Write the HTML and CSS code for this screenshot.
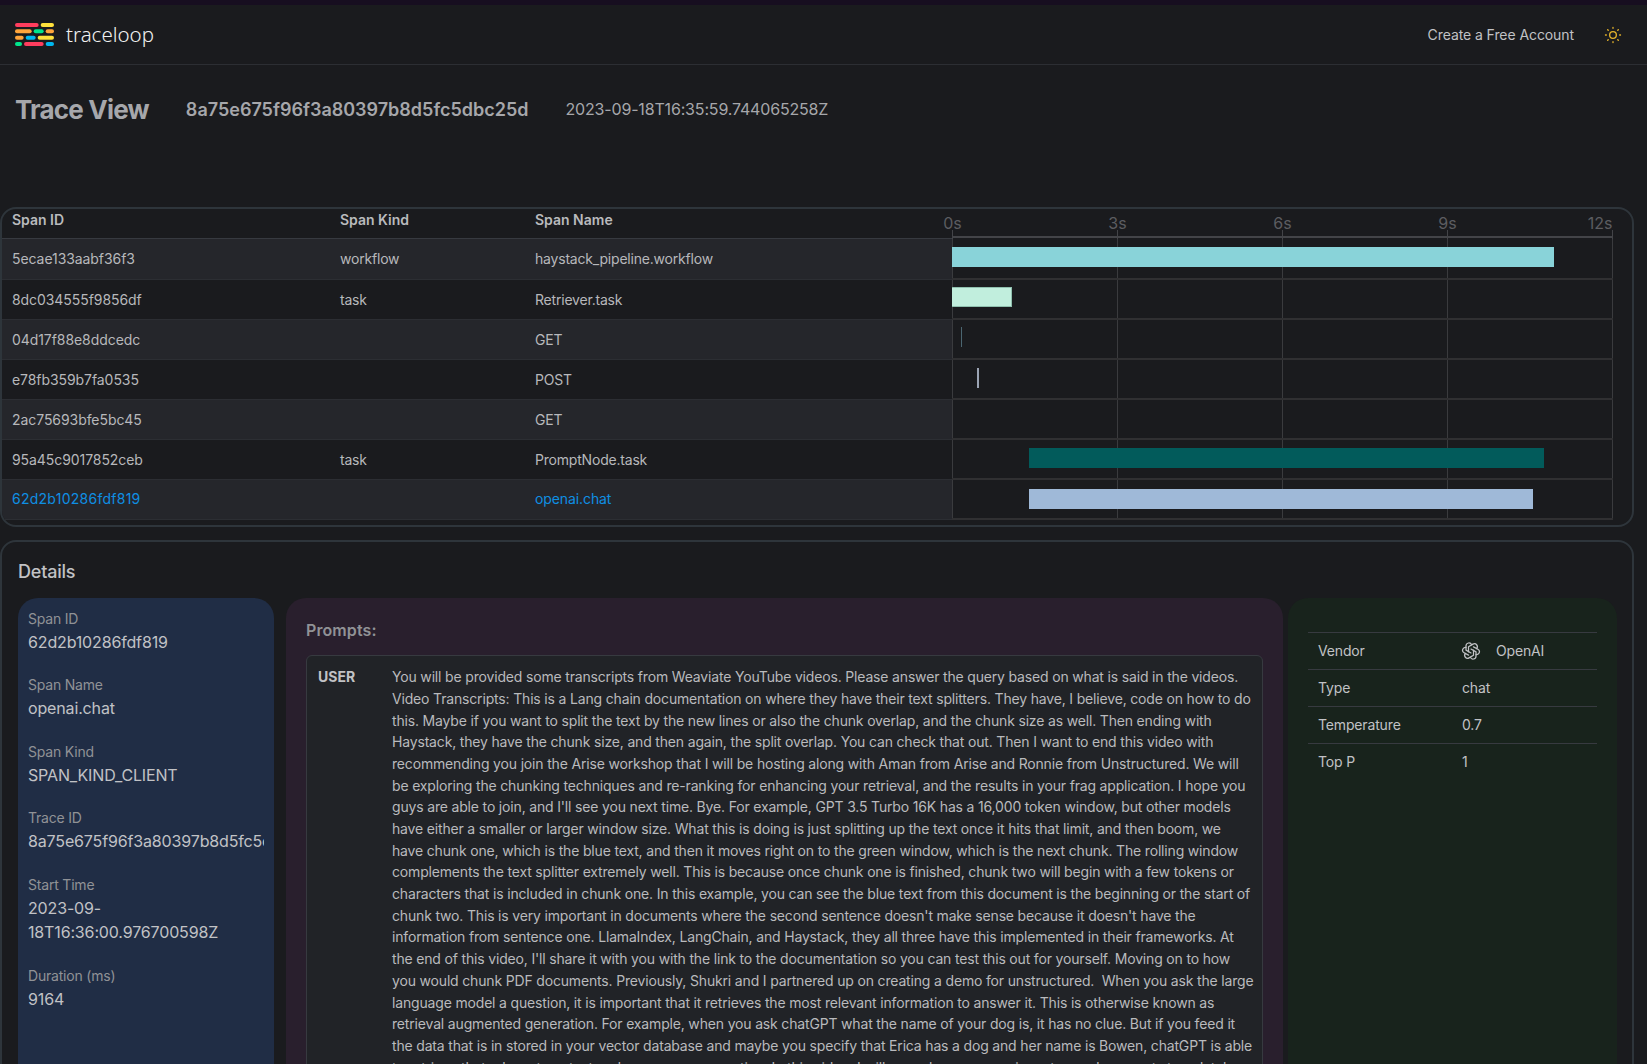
FILE: index.html
```html
<!DOCTYPE html>
<html lang="en">
<head>
<meta charset="utf-8">
<title>Trace View</title>
<link rel="stylesheet" href="styles.css">
</head>
<body>
<div class="strip"></div>
<header class="topbar">
  <div class="brand">
    <svg class="logo" viewBox="0 0 117 69" aria-hidden="true">
      <rect x="0" y="0" width="71" height="12" rx="6" fill="#ff3d5e"/><rect x="77" y="0" width="40" height="12" rx="6" fill="#ffe13c"/>
      <rect x="0" y="19" width="50" height="12" rx="6" fill="#ffa53c"/><rect x="56" y="19" width="30" height="12" rx="6" fill="#00e58c"/><rect x="92" y="19" width="25" height="12" rx="6" fill="#ffa53c"/>
      <rect x="0" y="38" width="26" height="12" rx="6" fill="#ffa53c"/><rect x="32" y="38" width="30" height="12" rx="6" fill="#00b8f0"/><rect x="68" y="38" width="49" height="12" rx="6" fill="#ffe13c"/>
      <rect x="0" y="57" width="21" height="12" rx="6" fill="#00e58c"/><rect x="27" y="57" width="59" height="12" rx="6" fill="#ff3d5e"/><rect x="92" y="57" width="25" height="12" rx="6" fill="#00b8f0"/>
    </svg>
    <span class="brand-name">traceloop</span>
  </div>
  <div class="top-actions">
    <a class="signup">Create a Free Account</a>
    <svg class="sun" viewBox="0 0 24 24" fill="none" stroke="currentColor" stroke-width="1.6" stroke-linecap="round" stroke-linejoin="round" aria-hidden="true"><path d="M12 12m-4 0a4 4 0 1 0 8 0a4 4 0 1 0 -8 0"/><path d="M3 12h1m8 -9v1m8 8h1m-9 8v1m-6.4 -15.4l.7 .7m12.1 -.7l-.7 .7m0 11.4l.7 .7m-12.1 -.7l-.7 .7"/></svg>
  </div>
</header>

<div class="title-row">
  <h2 class="title">Trace View</h2>
  <span class="trace-hash">8a75e675f96f3a80397b8d5fc5dbc25d</span>
  <span class="trace-time">2023-09-18T16:35:59.744065258Z</span>
</div>

<section class="span-card">
  <div class="span-row head">
    <div class="cell">Span ID</div>
    <div class="cell">Span Kind</div>
    <div class="cell">Span Name</div>
    <div class="chart-head"><div class="axis"><span>0s</span><span>3s</span><span>6s</span><span>9s</span><span class="axis-end">12s</span></div></div>
  </div>
  <div class="span-row first striped">
    <div class="cell id">5ecae133aabf36f3</div><div class="cell">workflow</div><div class="cell">haystack_pipeline.workflow</div>
    <div class="chart"><div class="bar c-teal" style="margin-left:0;width:602px"></div></div>
  </div>
  <div class="span-row">
    <div class="cell id">8dc034555f9856df</div><div class="cell">task</div><div class="cell">Retriever.task</div>
    <div class="chart"><div class="bar raised c-mint" style="margin-left:0;width:60px"></div></div>
  </div>
  <div class="span-row striped">
    <div class="cell id">04d17f88e8ddcedc</div><div class="cell"></div><div class="cell">GET</div>
    <div class="chart"><div class="bar raised c-slate" style="margin-left:9px;width:1px"></div></div>
  </div>
  <div class="span-row">
    <div class="cell id">e78fb359b7fa0535</div><div class="cell"></div><div class="cell">POST</div>
    <div class="chart"><div class="bar c-grey" style="margin-left:25px;width:2px"></div></div>
  </div>
  <div class="span-row striped">
    <div class="cell id">2ac75693bfe5bc45</div><div class="cell"></div><div class="cell">GET</div>
    <div class="chart"></div>
  </div>
  <div class="span-row">
    <div class="cell id">95a45c9017852ceb</div><div class="cell">task</div><div class="cell">PromptNode.task</div>
    <div class="chart"><div class="bar c-deep" style="margin-left:77px;width:515px"></div></div>
  </div>
  <div class="span-row striped selected">
    <div class="cell id">62d2b10286fdf819</div><div class="cell"></div><div class="cell">openai.chat</div>
    <div class="chart"><div class="bar lower c-blue" style="margin-left:77px;width:504px"></div></div>
  </div>
</section>

<section class="details-card">
  <h3 class="details-title">Details</h3>
  <div class="panels">
    <aside class="panel panel-blue">
      <div class="facts">
        <div class="fact"><div class="fact-label">Span ID</div><div class="fact-value">62d2b10286fdf819</div></div>
        <div class="fact"><div class="fact-label">Span Name</div><div class="fact-value">openai.chat</div></div>
        <div class="fact"><div class="fact-label">Span Kind</div><div class="fact-value">SPAN_KIND_CLIENT</div></div>
        <div class="fact"><div class="fact-label">Trace ID</div><div class="fact-value">8a75e675f96f3a80397b8d5fc5dbc25d</div></div>
        <div class="fact"><div class="fact-label">Start Time</div><div class="fact-value">2023-09-18T16:36:00.976700598Z</div></div>
        <div class="fact"><div class="fact-label">Duration (ms)</div><div class="fact-value">9164</div></div>
      </div>
    </aside>
    <main class="panel panel-plum">
      <div class="prompts-title">Prompts:</div>
      <div class="prompt-box">
        <div class="role">USER</div>
        <div class="prompt-text">You will be provided some transcripts from Weaviate YouTube videos. Please answer the query based on what is said in the videos.
Video Transcripts: This is a Lang chain documentation on where they have their text splitters. They have, I believe, code on how to do
this. Maybe if you want to split the text by the new lines or also the chunk overlap, and the chunk size as well. Then ending with
Haystack, they have the chunk size, and then again, the split overlap. You can check that out. Then I want to end this video with
recommending you join the Arise workshop that I will be hosting along with Aman from Arise and Ronnie from Unstructured. We will
be exploring the chunking techniques and re-ranking for enhancing your retrieval, and the results in your frag application. I hope you
guys are able to join, and I'll see you next time. Bye. For example, GPT 3.5 Turbo 16K has a 16,000 token window, but other models
have either a smaller or larger window size. What this is doing is just splitting up the text once it hits that limit, and then boom, we
have chunk one, which is the blue text, and then it moves right on to the green window, which is the next chunk. The rolling window
complements the text splitter extremely well. This is because once chunk one is finished, chunk two will begin with a few tokens or
characters that is included in chunk one. In this example, you can see the blue text from this document is the beginning or the start of
chunk two. This is very important in documents where the second sentence doesn't make sense because it doesn't have the
information from sentence one. LlamaIndex, LangChain, and Haystack, they all three have this implemented in their frameworks. At
the end of this video, I'll share it with you with the link to the documentation so you can test this out for yourself. Moving on to how
you would chunk PDF documents. Previously, Shukri and I partnered up on creating a demo for unstructured.  When you ask the large
language model a question, it is important that it retrieves the most relevant information to answer it. This is otherwise known as
retrieval augmented generation. For example, when you ask chatGPT what the name of your dog is, it has no clue. But if you feed it
the data that is in stored in your vector database and maybe you specify that Erica has a dog and her name is Bowen, chatGPT is able
to retrieve that relevant context and answer your question. In this video, I will cover how you can ingest your documents to a database.</div>
      </div>
    </main>
    <aside class="panel panel-green">
      <div class="meta">
        <div class="meta-row"><span class="meta-key">Vendor</span><span class="meta-val">
          <svg class="openai" viewBox="0 0 24 24" fill="none" stroke="currentColor" stroke-width="1.5" stroke-linecap="round" stroke-linejoin="round" aria-hidden="true"><path d="M11.217 19.384a3.501 3.501 0 0 0 6.783 -1.217v-5.167l-6 -3.35"/><path d="M5.214 15.014a3.501 3.501 0 0 0 4.446 5.266l5.34 -3.14v-6.17"/><path d="M6 7.63c-1.391 -.236 -2.787 .395 -3.534 1.689a3.474 3.474 0 0 0 1.271 4.745l5.263 2.906"/><path d="M12.783 4.616a3.501 3.501 0 0 0 -6.783 1.217v5.167l6 3.35"/><path d="M18.786 8.986a3.501 3.501 0 0 0 -4.446 -5.266l-5.34 3.14v6.17"/><path d="M18 16.37c1.391 .236 2.787 -.395 3.534 -1.689a3.474 3.474 0 0 0 -1.271 -4.745l-5.262 -2.906"/></svg>OpenAI</span></div>
        <div class="meta-row"><span class="meta-key">Type</span><span class="meta-val">chat</span></div>
        <div class="meta-row"><span class="meta-key">Temperature</span><span class="meta-val">0.7</span></div>
        <div class="meta-row"><span class="meta-key">Top P</span><span class="meta-val">1</span></div>
      </div>
    </aside>
  </div>
</section>
</body>
</html>
```
FILE: styles.css
```css
* { box-sizing: border-box; }
html, body { margin: 0; height: 100vh; overflow: hidden; }
body {
  background: #1a1b1e;
  color: #c1c2c5;
  font-family: Inter, "Liberation Sans", sans-serif;
  font-size: 14px;
  line-height: 1.55;
}
.strip { height: 5px; background: #170e20; }

.topbar {
  height: 60px;
  border-bottom: 1px solid #2c2e33;
  display: flex;
  align-items: center;
  justify-content: space-between;
  padding: 0 24px 0 15px;
}
.brand { display: flex; align-items: center; gap: 12px; }
.logo { width: 39px; height: 23px; display: block; }
.brand-name { font-family: "Noto Sans", sans-serif; font-size: 20.5px; font-weight: 300; color: #f1f1f1; line-height: 1; }
.top-actions { display: flex; align-items: center; gap: 29px; }
.signup { font-weight: 400; letter-spacing: -0.08px; color: #c1c2c5; }
.sun { width: 20px; height: 20px; color: #e5b32b; display: block; }

.title-row {
  height: 142px;
  padding: 27px 0 80px 15px;
  display: flex;
  align-items: center;
  gap: 37px;
}
.title { margin: 0; font-size: 26px; font-weight: 700; line-height: 35px; letter-spacing: -0.8px; color: #a6a7ab; }
.trace-hash { font-size: 18px; font-weight: 600; color: #a6a7ab; }
.trace-time { font-size: 16px; letter-spacing: -0.17px; color: #a6a7ab; }

.span-card {
  width: 1634px;
  height: 320px;
  border: 2px solid #2e353b;
  border-radius: 16px;
  overflow: hidden;
}
.span-row {
  display: grid;
  grid-template-columns: 328px 195px 427px 661px;
  height: 40px;
}
.span-row.head { height: 30px; }
.span-row.first { height: 41px; }
.cell {
  display: flex;
  align-items: center;
  padding-left: 10px;
  border-bottom: 1px solid #2c2e33;
  white-space: nowrap;
  color: #b7b8bb;
  letter-spacing: -0.2px;
}
.cell.id { letter-spacing: -0.07px; }
.head .cell {
  font-weight: 600;
  align-items: flex-start;
  line-height: 22px;
  letter-spacing: 0;
  color: #b9babd;
  border-bottom-color: #373a40;
}
.striped .cell { background: #25262b; }
.selected .cell { color: #0f8fe3; letter-spacing: -0.1px; padding-bottom: 2px; }
.selected .cell.id { letter-spacing: 0.26px; }

.chart-head {
  background:
    linear-gradient(#434448, #434448) 0 27px / 100% 2px no-repeat,
    repeating-linear-gradient(90deg, #434448 0 1px, transparent 1px 165px) bottom / 100% 9px no-repeat;
  height: 30px;
}
.axis { display: flex; margin-left: -82px; }
.axis span { flex: 0 0 165px; text-align: center; font-size: 16px; line-height: 29px; color: #5c5d61; }
.axis .axis-end { flex-basis: 82.5px; text-align: right; }

.chart {
  padding-top: 8px;
  background: repeating-linear-gradient(90deg, #3a3b3e 0 1px, transparent 1px 165px);
  border-bottom: 2px solid #303032;
}
.bar { height: 20px; }
.raised { margin-top: -1px; }
.lower { margin-top: 1px; }
.c-teal { background: #89d3d9; }
.c-mint { background: #c1eedd; border: 1px solid #8fbfae; border-left: 0; }
.c-slate { background: #4b6671; }
.c-grey { background: #9ba4b4; }
.c-deep { background: #025b5b; }
.c-blue { background: #9fb9d8; }

.details-card {
  width: 1634px;
  height: 700px;
  margin-top: 13px;
  border: 2px solid #2e353b;
  border-radius: 16px;
  padding: 16px 0 0 16px;
}
.details-title { margin: 0 0 12px; font-size: 18px; font-weight: 500; line-height: 28px; letter-spacing: -0.2px; color: #c1c2c5; }
.panels { display: flex; gap: 5px; align-items: stretch; height: 640px; }
.panel { border-radius: 20px; min-width: 0; }
.panel-blue { flex: 0 0 256px; margin-right: 7px; background: #202d45; padding: 10px; }
.panel-plum { flex: 0 0 997px; background: #291f2d; padding: 20px; }
.panel-green { flex: 0 0 329px; background: #18231c; padding: 34px 20px 0; }

.facts { display: flex; flex-direction: column; gap: 20px; overflow: hidden; }
.fact-label { color: #909296; letter-spacing: -0.2px; }
.fact-value { font-size: 16px; letter-spacing: -0.15px; color: #c1c2c5; }

.prompts-title { font-size: 16px; font-weight: 600; letter-spacing: 0.1px; color: #909296; margin-bottom: 12px; }
.prompt-box {
  display: flex;
  background: #212327;
  border: 1px solid #373a40;
  border-radius: 6px;
  padding: 10.4px 11px;
}
.role { flex: 0 0 74px; font-weight: 700; color: #c1c2c5; }
.prompt-text { flex: 1; white-space: pre; letter-spacing: -0.17px; color: #b9babd; }

.meta { border-top: 1px solid #373a40; letter-spacing: -0.15px; }
.meta-row { display: flex; align-items: center; height: 37px; padding-left: 10px; border-bottom: 1px solid #373a40; }
.meta-row:last-child { height: 36px; border-bottom: 0; }
.meta-key { flex: 0 0 144px; }
.meta-val { display: flex; align-items: center; gap: 15px; }
.openai { width: 20px; height: 20px; display: block; margin-left: -1px; }
```
